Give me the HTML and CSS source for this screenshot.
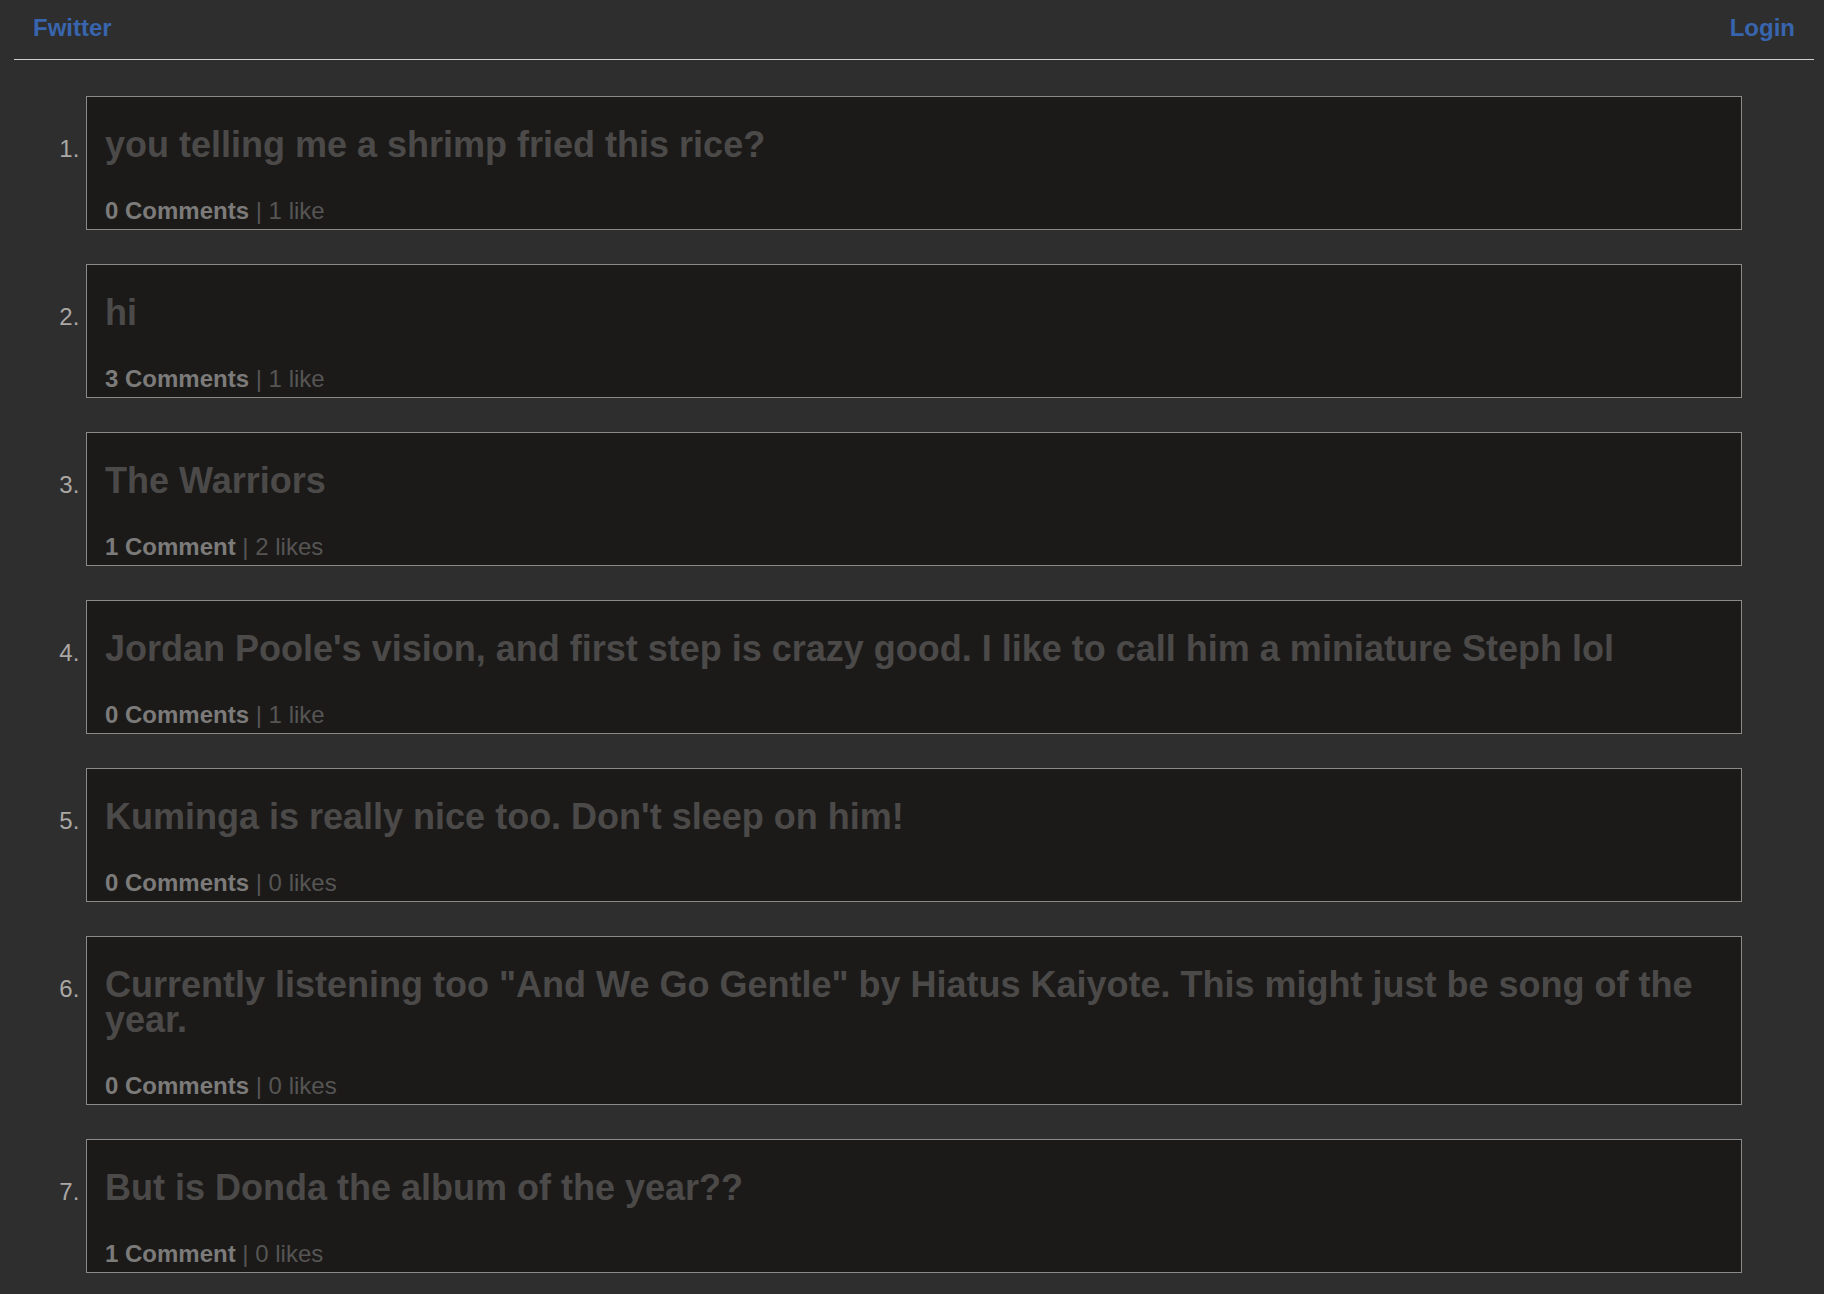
FILE: index.html
```html
<!DOCTYPE html>
<html>
<head>
<meta charset="utf-8">
<link rel="stylesheet" href="styles.css">
</head>
<body>
<header class="nav">
  <a class="brand" href="#">Fwitter</a>
  <a class="login" href="#">Login</a>
</header>
<ol class="posts">
  <li class="post"><h2 class="title">you telling me a shrimp fried this rice?</h2><p class="meta"><b class="comments">0 Comments</b> | 1 like</p></li>
  <li class="post"><h2 class="title">hi</h2><p class="meta"><b class="comments">3 Comments</b> | 1 like</p></li>
  <li class="post"><h2 class="title">The Warriors</h2><p class="meta"><b class="comments">1 Comment</b> | 2 likes</p></li>
  <li class="post"><h2 class="title">Jordan Poole's vision, and first step is crazy good. I like to call him a miniature Steph lol</h2><p class="meta"><b class="comments">0 Comments</b> | 1 like</p></li>
  <li class="post"><h2 class="title">Kuminga is really nice too. Don't sleep on him!</h2><p class="meta"><b class="comments">0 Comments</b> | 0 likes</p></li>
  <li class="post"><h2 class="title">Currently listening too "And We Go Gentle" by Hiatus Kaiyote. This might just be song of the year.</h2><p class="meta"><b class="comments">0 Comments</b> | 0 likes</p></li>
  <li class="post"><h2 class="title">But is Donda the album of the year??</h2><p class="meta"><b class="comments">1 Comment</b> | 0 likes</p></li>
</ol>
</body>
</html>
```

FILE: styles.css
```css
html, body {
  margin: 0;
  padding: 0;
  background: #2e2e2e;
  font-family: "Liberation Sans", Arial, Helvetica, sans-serif;
}
body {
  min-height: 1294px;
}
.nav {
  display: flex;
  justify-content: space-between;
  align-items: flex-start;
  margin: 0 10px 0 14px;
  padding: 13px 19px 0 19px;
  height: 60px;
  box-sizing: border-box;
  border-bottom: 1px solid #cfcfcf;
}
.nav a {
  color: #3865ad;
  text-decoration: none;
  font-weight: bold;
  font-size: 24px;
  line-height: 30px;
}
.posts {
  margin: 36px 0 0 0;
  padding: 0 82px 20px 86px;
  list-style: decimal outside;
}
.post {
  background: #1b1a19;
  border: 1px solid #8a8a8a;
  margin: 0 0 34px 0;
  padding: 30px 18px 5px 18px;
  font-size: 24px;
  color: #a9a6a4;
}
.post::marker {
  color: #aaa7a5;
}
.title {
  margin: 0;
  font-size: 36px;
  line-height: 35px;
  font-weight: bold;
  color: #4b4a49;
}
.meta {
  margin: 36px 0 0 0;
  font-size: 24px;
  line-height: 26px;
  color: #565554;
}
.comments {
  color: #7c7b7a;
}
```
